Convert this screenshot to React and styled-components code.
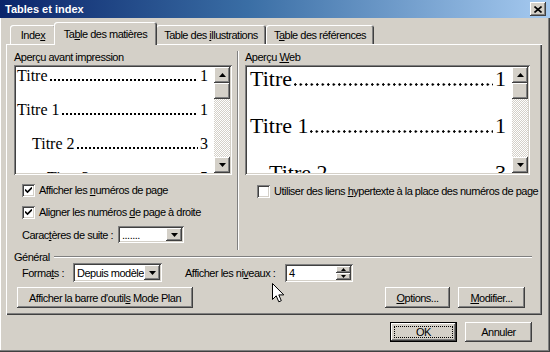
import React from "react";
import styled, { createGlobalStyle, css } from "styled-components";

const GlobalStyle = createGlobalStyle`
  html, body {
    margin: 0;
    padding: 0;
    background: #d4d0c8;
  }
  body {
    font-family: "Liberation Sans", Arial, sans-serif;
    font-size: 11px;
    letter-spacing: -0.5px;
    color: #000;
  }
`;

const raised = css`
  box-shadow: inset -1px -1px #404040, inset 1px 1px #ffffff, inset -2px -2px #808080, inset 2px 2px #d4d0c8;
`;

const sunken = css`
  box-shadow: inset 1px 1px #808080, inset -1px -1px #ffffff, inset 2px 2px #404040, inset -2px -2px #d4d0c8;
`;

const Window = styled.div`
  position: relative;
  width: 550px;
  height: 352px;
  box-sizing: border-box;
  background: #d4d0c8;
  display: flex;
  flex-direction: column;
  box-shadow: inset -1px -1px #404040, inset -2px -2px #808080, inset 1px 0 #ffffff;
  overflow: hidden;
`;

const TitleBar = styled.div`
  height: 18px;
  flex: none;
  display: flex;
  align-items: center;
  justify-content: space-between;
  padding: 0 4px 0 5px;
  background: linear-gradient(to right, #0a246a, #3a6ea5 45%, #a6caf0);
  color: #fff;
  font-weight: bold;
  font-size: 11px;
  letter-spacing: 0;
`;

const CloseButton = styled.div`
  width: 16px;
  height: 14px;
  background: #d4d0c8;
  ${raised};
  display: flex;
  align-items: center;
  justify-content: center;
`;

const Body = styled.div`
  flex: 1;
  padding: 4px 8px 0 6px;
  display: flex;
  flex-direction: column;
`;

const TabRow = styled.div`
  height: 22px;
  display: flex;
  align-items: flex-end;
  padding-left: 4px;
`;

const Tab = styled.div`
  position: relative;
  width: ${(p) => p.$w}px;
  height: ${(p) => (p.$active ? 23 : 19)}px;
  margin: ${(p) => (p.$active ? "0 -1px -1px -2px" : "0")};
  z-index: ${(p) => (p.$active ? 2 : 1)};
  box-sizing: border-box;
  background: #d4d0c8;
  border-radius: 3px 3px 0 0;
  box-shadow: inset 1px 1px #ffffff, inset -1px 0 #404040, inset -2px 0 #808080;
  display: flex;
  align-items: center;
  justify-content: center;
  white-space: nowrap;
  padding-top: ${(p) => (p.$active ? 0 : 1)}px;
`;

const Panel = styled.div`
  height: 271px;
  box-sizing: border-box;
  padding: 7px 10px 0 8px;
  box-shadow: inset 1px 1px #ffffff, inset -1px -1px #404040, inset -2px -2px #808080;
  display: flex;
  flex-direction: column;
`;

const TopSection = styled.div`
  height: 199px;
  display: flex;
`;

const Column = styled.div`
  width: ${(p) => p.$w}px;
  display: flex;
  flex-direction: column;
`;

const Separator = styled.div`
  width: 0;
  border-left: 1px solid #808080;
  border-right: 1px solid #ffffff;
  margin: 0 6px 0 5px;
`;

const Label = styled.div`
  height: 13px;
  line-height: 13px;
  margin-bottom: 1px;
  white-space: nowrap;
`;

const U = styled.span`
  text-decoration: underline;
  text-underline-offset: 1px;
`;

const Preview = styled.div`
  height: 110px;
  box-sizing: border-box;
  padding: 2px;
  background: #fff;
  ${sunken};
  display: flex;
`;

const PreviewContent = styled.div`
  flex: 1;
  overflow: hidden;
  padding: 0 ${(p) => p.$pr}px 0 ${(p) => p.$pl}px;
  font-family: "Liberation Serif", "Times New Roman", serif;
  letter-spacing: 0;
  font-size: ${(p) => p.$size}px;
  line-height: ${(p) => p.$lh}px;
`;

const EntryList = styled.div`
  margin-top: ${(p) => p.$offset}px;
`;

const Entry = styled.div`
  display: flex;
  white-space: pre;
  padding-left: ${(p) => p.$indent}px;
`;

/* dotted leader drawn as a repeated dot on the text baseline */
const Leader = styled.span`
  flex: 1;
  margin: 0 2px;
  background-image: radial-gradient(circle at ${(p) => p.$dot}px ${(p) => p.$dot}px, #000 ${(p) => p.$dot * 0.75}px, transparent ${(p) => p.$dot}px);
  background-size: ${(p) => p.$step}px ${(p) => p.$dot * 2}px;
  background-repeat: repeat-x;
  background-position: 0 ${(p) => p.$y}px;
`;

const Scrollbar = styled.div`
  width: 16px;
  display: flex;
  flex-direction: column;
`;

const SmallButton = styled.div`
  width: ${(p) => p.$w || 16}px;
  height: ${(p) => p.$h || 16}px;
  flex: none;
  box-sizing: border-box;
  background: #d4d0c8;
  ${raised};
  display: flex;
  align-items: center;
  justify-content: center;
`;

const Track = styled.div`
  flex: 1;
  background-color: #ece9e3;
  background-image: repeating-conic-gradient(#ffffff 0 25%, #d4d0c8 0 50%);
  background-size: 2px 2px;
`;

const CheckRow = styled.div`
  display: flex;
  align-items: center;
  height: 14px;
  margin-top: ${(p) => p.$mt}px;
  padding-left: ${(p) => p.$pl}px;
  white-space: nowrap;
`;

const Box = styled.div`
  width: 13px;
  height: 13px;
  flex: none;
  box-sizing: border-box;
  background: #fff;
  ${sunken};
  margin-right: 4px;
  display: flex;
  align-items: center;
  justify-content: center;
`;

const FieldRow = styled.div`
  display: flex;
  align-items: center;
  height: ${(p) => p.$h}px;
  margin-top: ${(p) => p.$mt || 0}px;
  padding-left: 8px;
  white-space: nowrap;
`;

const FieldLabel = styled.span`
  width: ${(p) => p.$w}px;
  margin-left: ${(p) => p.$ml || 0}px;
  flex: none;
`;

const Field = styled.div`
  width: ${(p) => p.$w}px;
  height: ${(p) => p.$h}px;
  box-sizing: border-box;
  padding: 2px;
  background: #fff;
  ${sunken};
  display: flex;
  align-items: center;
`;

const FieldText = styled.span`
  flex: 1;
  padding-left: 2px;
  overflow: hidden;
  white-space: nowrap;
`;

const SpinStack = styled.div`
  display: flex;
  flex-direction: column;
`;

const GroupHeader = styled.div`
  height: 13px;
  display: flex;
  align-items: center;
`;

const GroupLine = styled.div`
  flex: 1;
  margin-left: 4px;
  height: 0;
  border-top: 1px solid #808080;
  border-bottom: 1px solid #ffffff;
`;

const ButtonRow = styled.div`
  display: flex;
  align-items: center;
  margin-top: 5px;
  padding: 0 7px 0 3px;
  gap: 8px;
`;

const Button = styled.div`
  position: relative;
  width: ${(p) => p.$w}px;
  height: ${(p) => p.$h || 21}px;
  margin-left: ${(p) => (p.$push ? "auto" : "0")};
  box-sizing: border-box;
  background: #d4d0c8;
  ${raised};
  display: flex;
  align-items: center;
  justify-content: center;
  white-space: nowrap;
  ${(p) =>
    p.$default &&
    css`
      box-shadow: inset 0 0 0 1px #000, inset -2px -2px #404040, inset 2px 2px #ffffff, inset -3px -3px #808080;
      &::after {
        content: "";
        position: absolute;
        inset: 4px;
        border: 1px dotted #000;
      }
    `}
`;

const Footer = styled.div`
  display: flex;
  justify-content: flex-end;
  gap: 8px;
  margin-top: 7px;
  padding-right: 10px;
`;

const Cursor = styled.svg`
  position: absolute;
  left: 272px;
  top: 283px;
`;

const Down = () => (
  <svg width="7" height="4" viewBox="0 0 7 4">
    <path d="M0 0h7L3.5 4z" fill="#000" />
  </svg>
);

const Up = () => (
  <svg width="7" height="4" viewBox="0 0 7 4">
    <path d="M0 4h7L3.5 0z" fill="#000" />
  </svg>
);

const Tiny = ({ up }) => (
  <svg width="5" height="3" viewBox="0 0 5 3">
    <path d={up ? "M0 3h5L2.5 0z" : "M0 0h5L2.5 3z"} fill="#000" />
  </svg>
);

const Check = () => (
  <svg width="7" height="7" viewBox="0 0 7 7">
    <path d="M0 2.5l2.5 2.5L7 0.5" stroke="#000" strokeWidth="1.6" fill="none" />
  </svg>
);

const ScrollBar = () => (
  <Scrollbar>
    <SmallButton>
      <Up />
    </SmallButton>
    <SmallButton />
    <Track />
    <SmallButton>
      <Down />
    </SmallButton>
  </Scrollbar>
);

const Combo = ({ w, h, children }) => (
  <Field $w={w} $h={h}>
    <FieldText>{children}</FieldText>
    <SmallButton $w={16} $h={h - 4}>
      <Down />
    </SmallButton>
  </Field>
);

const printEntries = [
  { text: "Titre", page: "1", indent: 1 },
  { text: "Titre 1", page: "1", indent: 1 },
  { text: "Titre 2", page: "3", indent: 16 },
  { text: "Titre 3", page: "5", indent: 31 },
];

const webEntries = [
  { text: "Titre", page: "1", indent: 1 },
  { text: "Titre 1", page: "1", indent: 1 },
  { text: "Titre 2", page: "3", indent: 20 },
];

export default function App() {
  return (
    <>
      <GlobalStyle />
      <Window>
        <TitleBar>
          <span>Tables et index</span>
          <CloseButton>
            <svg width="8" height="7" viewBox="0 0 8 7">
              <path d="M0.5 0.5l7 6M7.5 0.5l-7 6" stroke="#000" strokeWidth="1.6" />
            </svg>
          </CloseButton>
        </TitleBar>
        <Body>
          <TabRow>
            <Tab $w={46}>
              <span>
                Inde<U>x</U>
              </span>
            </Tab>
            <Tab $w={103} $active>
              <span>
                Ta<U>b</U>le des matières
              </span>
            </Tab>
            <Tab $w={110}>
              <span>
                Table des <U>i</U>llustrations
              </span>
            </Tab>
            <Tab $w={108}>
              <span>
                T<U>a</U>ble des références
              </span>
            </Tab>
          </TabRow>
          <Panel>
            <TopSection>
              <Column $w={218}>
                <Label>Aperçu avant impression</Label>
                <Preview>
                  <PreviewContent $size={16} $lh={34} $pl={0} $pr={6}>
                    <EntryList $offset={-8}>
                      {printEntries.map((e) => (
                        <Entry key={e.text} $indent={e.indent}>
                          <span>{e.text}</span>
                          <Leader $dot={1} $step={4} $y={20} />
                          <span>{e.page}</span>
                        </Entry>
                      ))}
                    </EntryList>
                  </PreviewContent>
                  <ScrollBar />
                </Preview>
                <CheckRow $mt={8} $pl={8}>
                  <Box>
                    <Check />
                  </Box>
                  <span>
                    Afficher les <U>n</U>uméros de page
                  </span>
                </CheckRow>
                <CheckRow $mt={8} $pl={8}>
                  <Box>
                    <Check />
                  </Box>
                  <span>
                    Aligner les numéros <U>d</U>e page à droite
                  </span>
                </CheckRow>
                <FieldRow $h={17} $mt={7}>
                  <FieldLabel $w={96}>
                    Carac<U>t</U>ères de suite :
                  </FieldLabel>
                  <Combo w={66} h={17}>
                    .......
                  </Combo>
                </FieldRow>
              </Column>
              <Separator />
              <Column $w={285}>
                <Label>
                  Aperçu <U>W</U>eb
                </Label>
                <Preview>
                  <PreviewContent $size={22} $lh={47} $pl={2} $pr={6}>
                    <EntryList $offset={-12}>
                      {webEntries.map((e) => (
                        <Entry key={e.text} $indent={e.indent}>
                          <span>{e.text}</span>
                          <Leader $dot={1.3} $step={5.5} $y={28} />
                          <span>{e.page}</span>
                        </Entry>
                      ))}
                    </EntryList>
                  </PreviewContent>
                  <ScrollBar />
                </Preview>
                <CheckRow $mt={9} $pl={12}>
                  <Box />
                  <span>
                    Utiliser des liens <U>h</U>ypertexte à la place des numéros de page
                  </span>
                </CheckRow>
              </Column>
            </TopSection>
            <GroupHeader>
              <span>Général</span>
              <GroupLine />
            </GroupHeader>
            <FieldRow $h={19}>
              <FieldLabel $w={51}>
                Forma<U>t</U>s :
              </FieldLabel>
              <Combo w={89} h={19}>
                Depuis modèle
              </Combo>
              <FieldLabel $w={100} $ml={23}>
                Afficher les ni<U>v</U>eaux :
              </FieldLabel>
              <Field $w={68} $h={18}>
                <FieldText>4</FieldText>
                <SpinStack>
                  <SmallButton $w={15} $h={7}>
                    <Tiny up />
                  </SmallButton>
                  <SmallButton $w={15} $h={7}>
                    <Tiny />
                  </SmallButton>
                </SpinStack>
              </Field>
            </FieldRow>
            <ButtonRow>
              <Button $w={176}>
                <span>
                  Afficher la barre d'outil<U>s</U> Mode Plan
                </span>
              </Button>
              <Button $w={65} $push>
                <span>
                  <U>O</U>ptions...
                </span>
              </Button>
              <Button $w={67}>
                <span>
                  <U>M</U>odifier...
                </span>
              </Button>
            </ButtonRow>
          </Panel>
          <Footer>
            <Button $w={67} $h={20} $default>
              <span>OK</span>
            </Button>
            <Button $w={67} $h={20}>
              <span>Annuler</span>
            </Button>
          </Footer>
        </Body>
        <Cursor width="13" height="20" viewBox="0 0 13 20">
          <path d="M0.5 0.5V16.5L4.2 12.8L6.8 18.8L9.3 17.7L6.8 11.9H11.8Z" fill="#fff" stroke="#000" strokeWidth="1" />
        </Cursor>
      </Window>
    </>
  );
}
